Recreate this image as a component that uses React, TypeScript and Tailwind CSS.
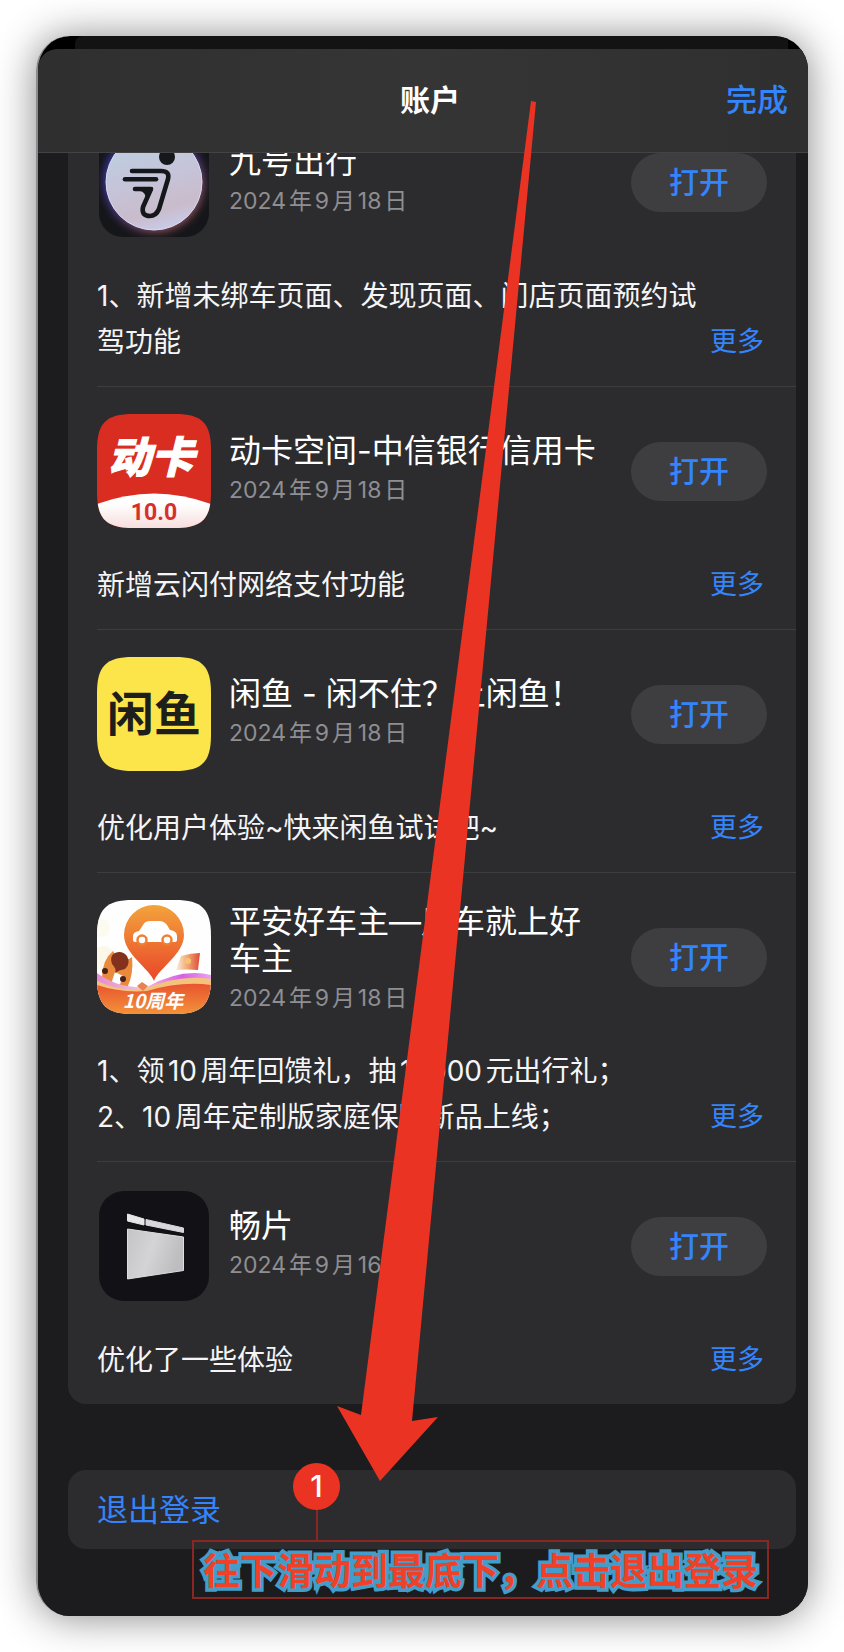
import type { ReactNode } from "react";

const iconClass = "block size-[114px] shrink-0 [text-autospace:no-autospace]";
const squircle =
  "M36 0H78C105 0 114 9 114 36V78C114 105 105 114 78 114H36C9 114 0 105 0 78V36C0 9 9 0 36 0Z";

function NinebotIcon() {
  return (
    <svg viewBox="0 0 114 114" className={iconClass} aria-hidden="true">
      <defs>
        <linearGradient id="nb-disc" x1="0.3" y1="0" x2="0.6" y2="1">
          <stop offset="0" stopColor="#bcd0e2" />
          <stop offset="0.5" stopColor="#c6c3d8" />
          <stop offset="0.8" stopColor="#c9bccb" />
          <stop offset="1" stopColor="#c9cbe8" />
        </linearGradient>
        <linearGradient id="nb-glow" x1="0" y1="0" x2="0.7" y2="1">
          <stop offset="0" stopColor="#3d3fd0" />
          <stop offset="0.55" stopColor="#4a3a8c" />
          <stop offset="1" stopColor="#a35a58" />
        </linearGradient>
        <filter id="nb-blur" x="-20%" y="-20%" width="140%" height="140%">
          <feGaussianBlur stdDeviation="4" />
        </filter>
        <clipPath id="nb-clip">
          <rect x="2" y="2" width="110" height="110" rx="24" />
        </clipPath>
      </defs>
      <g clipPath="url(#nb-clip)">
        <rect width="114" height="114" fill="#15161a" />
        <circle cx="57" cy="57" r="50" fill="url(#nb-glow)" filter="url(#nb-blur)" />
        <circle cx="57" cy="57" r="48" fill="url(#nb-disc)" stroke="#d9dcf6" strokeWidth="1" />
      </g>
      <circle cx="70" cy="32" r="8" fill="#15181b" />
      <g fill="none" stroke="#15181b" strokeWidth="4.6" strokeLinecap="round" strokeLinejoin="round">
        <path d="M35 46H64Q73 46 71 54L62 84Q59 91 53 91Q44 91 46 82L54 64H38" />
        <path d="M28 54.3H59" />
      </g>
      <path d="M38 62H56L49 77Q50 67 42 65.500Z" fill="#15181b" />
    </svg>
  );
}

function DongkaIcon() {
  return (
    <svg viewBox="0 0 114 114" className={iconClass} aria-hidden="true">
      <defs>
        <clipPath id="dk-clip">
          <path d={squircle} />
        </clipPath>
        <linearGradient id="dk-fade" x1="0" y1="0" x2="0" y2="1">
          <stop offset="0.3" stopColor="#ffffff" />
          <stop offset="1" stopColor="#f6dedd" />
        </linearGradient>
      </defs>
      <g clipPath="url(#dk-clip)">
        <rect width="114" height="114" fill="#d92d21" />
        <path d="M0 90Q57 69 114 90V114H0Z" fill="url(#dk-fade)" />
      </g>
      <text
        x="54"
        y="59"
        textAnchor="middle"
        fontSize="43"
        fill="#fff"
        stroke="#fff"
        strokeWidth="1"
        className="font-['Noto_Sans_CJK_SC',sans-serif] font-black italic"
      >
        动卡
      </text>
      <text
        x="57"
        y="106"
        textAnchor="middle"
        fontSize="23"
        fill="#d5302c"
        className="font-['Roboto',sans-serif] font-bold"
      >
        10.0
      </text>
    </svg>
  );
}

function XianyuIcon() {
  return (
    <svg viewBox="0 0 114 114" className={iconClass} aria-hidden="true">
      <path d={squircle} fill="#fce44b" />
      <text
        x="57"
        y="74"
        textAnchor="middle"
        fontSize="47"
        fill="#1e1e1a"
        className="font-['Noto_Sans_CJK_SC',sans-serif] font-bold"
      >
        闲鱼
      </text>
    </svg>
  );
}

function PinganIcon() {
  return (
    <svg viewBox="0 0 114 114" className={iconClass} aria-hidden="true">
      <defs>
        <clipPath id="pa-clip">
          <path d={squircle} />
        </clipPath>
        <linearGradient id="pa-pin" x1="0" y1="0" x2="0" y2="1">
          <stop offset="0" stopColor="#f3a33c" />
          <stop offset="0.9" stopColor="#ea4f2b" />
        </linearGradient>
        <linearGradient id="pa-base" x1="0" y1="0" x2="0" y2="1">
          <stop offset="0" stopColor="#e8542e" />
          <stop offset="1" stopColor="#f3923a" />
        </linearGradient>
        <linearGradient id="pa-card" x1="0" y1="0" x2="1" y2="0">
          <stop offset="0" stopColor="#fdeed8" />
          <stop offset="0.5" stopColor="#f0a470" />
          <stop offset="1" stopColor="#dd4a3c" />
        </linearGradient>
        <linearGradient id="pa-ribbon" x1="0" y1="0" x2="1" y2="0">
          <stop offset="0" stopColor="#e58bd0" />
          <stop offset="0.4" stopColor="#f3c3da" />
          <stop offset="0.75" stopColor="#d65fe6" />
          <stop offset="1" stopColor="#e9a3ec" />
        </linearGradient>
      </defs>
      <g clipPath="url(#pa-clip)">
        <rect width="114" height="114" fill="#fffefe" />
        <circle cx="4" cy="28" r="9" fill="#fdfbf0" />
        <circle cx="6" cy="58" r="12" fill="#fbf8ea" />
        <path d="M5 78Q5 60 16 51L20 57L32 59L35 57Q37 74 30 88L8 88Z" fill="#e98a3c" />
        <path d="M12 90L18 72L26 76L21 90Z" fill="#fff" />
        <path d="M18 73Q20 69 15 64Q12 56 18 53Q25 50 30 56Q34 64 28 69Q22 70 18 73Z" fill="#83301d" />
        <circle cx="8" cy="71" r="3" fill="#4b2115" />
        <circle cx="26" cy="79" r="3" fill="#4b2115" />
        <path d="M84 56Q94 53 103 53L101 70Q90 69 79 70Z" fill="url(#pa-card)" />
        <circle cx="91" cy="61" r="3" fill="#f6c36f" />
        <path d="M0 73Q22 89 50 87Q84 68 114 75V90H0Z" fill="url(#pa-ribbon)" />
        <path d="M0 81Q24 92 48 89Q82 74 114 79V95H0Z" fill="#f5c27b" />
        <path d="M0 85Q24 93 50 91Q84 81 114 85V114H0Z" fill="url(#pa-base)" />
        <path d="M57 81C52 68 27 54 27 35A30 30 0 0 1 87 35C87 54 62 68 57 81Z" fill="url(#pa-pin)" />
        <path
          d="M36 40V36Q36 32 42 31L46 25Q48 21 53 21H62Q67 21 70 25L73 30Q80 31 80 36V40Q80 42 77 42H39Q36 42 36 40Z"
          fill="#fff"
        />
        <circle cx="45" cy="40" r="4.500" fill="#fff" stroke="#ef7f35" strokeWidth="2.500" />
        <circle cx="70" cy="40" r="4.500" fill="#fff" stroke="#ef7f35" strokeWidth="2.500" />
        <path d="M40 86L45 82L51 86L46 91Z" fill="#ea8250" />
      </g>
      <text
        x="56"
        y="108"
        textAnchor="middle"
        fontSize="19"
        fill="#fff"
        className="font-['Noto_Sans_CJK_SC',sans-serif] font-bold italic"
      >
        10周年
      </text>
    </svg>
  );
}

function ChangpianIcon() {
  return (
    <svg viewBox="0 0 114 114" className={iconClass} aria-hidden="true">
      <defs>
        <linearGradient id="cp-a" x1="0" y1="0" x2="1" y2="0.3">
          <stop offset="0" stopColor="#c4c4c6" />
          <stop offset="0.5" stopColor="#d4d4d6" />
          <stop offset="1" stopColor="#bdbdc0" />
        </linearGradient>
      </defs>
      <rect x="2" y="2" width="110" height="110" rx="25" fill="#111116" />
      <path d="M30.500 25L47 30V36L30.500 32Z" fill="#e6e6e8" stroke="#e6e6e8" strokeLinejoin="round" />
      <path d="M49 30.500L86.500 39V43.500L49 36Z" fill="#d8d8da" stroke="#d8d8da" strokeLinejoin="round" />
      <path d="M30.500 40L86.500 48V81.500L30.500 90Z" fill="url(#cp-a)" stroke="#dedee0" strokeLinejoin="round" />
    </svg>
  );
}

type AppUpdate = {
  name: string;
  date: string;
  notes: string[];
  icon: ReactNode;
  tall?: boolean;
};

const updates: AppUpdate[] = [
  {
    name: "九号出行",
    date: "2024年9月18日",
    notes: ["1、新增未绑车页面、发现页面、门店页面预约试", "驾功能"],
    icon: <NinebotIcon />,
  },
  {
    name: "动卡空间-中信银行信用卡",
    date: "2024年9月18日",
    notes: ["新增云闪付网络支付功能"],
    icon: <DongkaIcon />,
  },
  {
    name: "闲鱼 - 闲不住？上闲鱼！",
    date: "2024年9月18日",
    notes: ["优化用户体验~快来闲鱼试试吧~"],
    icon: <XianyuIcon />,
  },
  {
    name: "平安好车主—用车就上好车主",
    date: "2024年9月18日",
    notes: ["1、领10周年回馈礼，抽10000元出行礼；", "2、10周年定制版家庭保障新品上线；"],
    icon: <PinganIcon />,
    tall: true,
  },
  {
    name: "畅片",
    date: "2024年9月16日",
    notes: ["优化了一些体验"],
    icon: <ChangpianIcon />,
  },
];

function UpdateRow({ app, last }: { app: AppUpdate; last: boolean }) {
  return (
    <li className={last ? "pt-[27px] pb-[21px]" : "border-b border-[#3d3d40] pt-[27px] pb-[21px]"}>
      <div className="flex h-[114px] items-center pr-[29px]">
        {app.icon}
        <div className={app.tall ? "ml-[18px] min-w-0 flex-1 pt-2" : "ml-[18px] min-w-0 flex-1"}>
          <h2 className="max-w-[376px] text-[32px] leading-[37px] font-normal text-white">{app.name}</h2>
          <p className="text-[23px] leading-[42px] text-[#8e8e93]">{app.date}</p>
        </div>
        <button
          type="button"
          className="h-[59px] w-[136px] shrink-0 rounded-full bg-[#3e3e40] text-[30px] font-medium text-[#3484fb]"
        >
          打开
        </button>
      </div>
      <div className="mt-[34px] flex items-end justify-between pr-[32px]">
        <p className="text-[28px] leading-[46px] whitespace-nowrap text-[#f5f5f7]">
          {app.notes.map((line) => (
            <span key={line} className="block">
              {line}
            </span>
          ))}
        </p>
        <button type="button" className="-ml-20 shrink-0 text-[27px] leading-[46px] text-[#3484fb]">
          更多
        </button>
      </div>
    </li>
  );
}

export default function App() {
  return (
    <div className="bg-white p-9 font-['Inter','Noto_Sans_CJK_SC',sans-serif] [text-autospace:normal]">
      <div className="relative rounded-[34px] shadow-[0_1px_40px_rgba(0,0,0,0.48)]">
        <main className="isolate overflow-hidden rounded-[34px] border-l-2 border-[#8b8b8b] bg-black">
          <div className="mr-5 ml-[37px] h-[13px] rounded-tl-lg bg-[#131313]" />
          <div className="overflow-hidden rounded-tl-[20px] bg-[#1c1c1e]">
            <header className="relative z-10 grid h-[104px] grid-cols-3 items-center border-b border-[#434345] bg-linear-to-r from-[#2f2f30] via-[#353535] to-[#2f2f30] pr-5 pl-[34px]">
              <h1 className="col-start-2 text-center text-[30px] font-semibold text-white">账户</h1>
              <button type="button" className="justify-self-end text-[31px] font-medium text-[#3484fb]">
                完成
              </button>
            </header>
            <div className="-mt-[55px] pr-3 pb-[67px] pl-[30px]">
              <ul className="rounded-[18px] bg-[#2c2c2e] pl-[29px]">
                {updates.map((app, i) => (
                  <UpdateRow key={app.name} app={app} last={i === updates.length - 1} />
                ))}
              </ul>
              <button
                type="button"
                className="mt-[66px] block h-[79px] w-full rounded-[18px] bg-[#2c2c2e] pt-0.5 pl-[29px] text-left text-[31px] text-[#3484fb]"
              >
                退出登录
              </button>
            </div>
          </div>
        </main>

        <svg
          viewBox="0 0 102 1380"
          className="pointer-events-none absolute top-[65px] left-[301px] z-20 h-[1380px] w-[102px] overflow-visible"
          aria-hidden="true"
        >
          <path d="M194 0L199 1L75 1320L101 1316L43 1380L0 1305L24 1314Z" fill="#ea3323" />
        </svg>

        <div className="absolute right-[39px] bottom-[17px] left-[156px] flex h-[59px] items-center border-2 border-[#8b2722] pt-1 pl-[9px]">
          <p className="text-[37px] font-bold whitespace-nowrap text-[#ee4128] [-webkit-text-stroke:7px_#439dcb] [paint-order:stroke_fill]">
            往下滑动到最底下，点击退出登录
          </p>
          <div className="absolute bottom-full left-[99px] flex w-[47px] flex-col items-center">
            <span className="flex size-[47px] items-center justify-center rounded-full bg-[#ea3323] text-[30px] font-medium text-white">
              1
            </span>
            <span className="h-8 w-0.5 bg-[#8b2722]" />
          </div>
        </div>
      </div>
    </div>
  );
}
